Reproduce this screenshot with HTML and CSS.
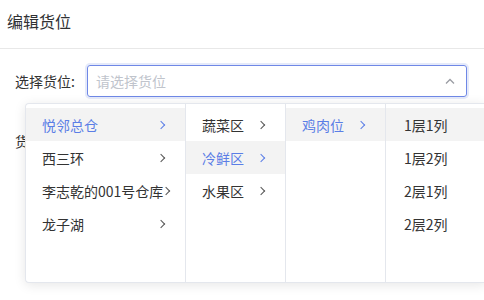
FILE: index.html
```html
<!DOCTYPE html>
<html lang="zh">
<head>
    <meta charset="UTF-8">
    <title>编辑货位</title>
    <link rel="stylesheet" href="styles.css">
</head>
<body>
    <div class="dialog">
        <div class="dialog-header">编辑货位</div>

        <div class="dialog-body">
            <div class="form-row">
                <label class="form-label">选择货位:</label>
                <div class="select">
                    <div class="select-input">
                        <span class="placeholder">请选择货位</span>
                        <svg class="select-arrow" width="10" height="6" viewBox="0 0 10 6">
                            <polyline points="1,5.5 5,1.5 9,5.5" fill="none" stroke="#9a9ca3" stroke-width="1.3"/>
                        </svg>
                    </div>

                    <div class="cascader">
                        <ul class="cascader-menu menu-wide">
                            <li class="item active"><span>悦邻总仓</span><i class="chev"></i></li>
                            <li class="item"><span>西三环</span><i class="chev"></i></li>
                            <li class="item"><span>李志乾的001号仓库</span><i class="chev"></i></li>
                            <li class="item"><span>龙子湖</span><i class="chev"></i></li>
                        </ul>
                        <ul class="cascader-menu">
                            <li class="item"><span>蔬菜区</span><i class="chev"></i></li>
                            <li class="item active"><span>冷鲜区</span><i class="chev"></i></li>
                            <li class="item"><span>水果区</span><i class="chev"></i></li>
                        </ul>
                        <ul class="cascader-menu">
                            <li class="item active"><span>鸡肉位</span><i class="chev"></i></li>
                        </ul>
                        <ul class="cascader-menu menu-last">
                            <li class="item leaf hover"><span>1层1列</span></li>
                            <li class="item leaf"><span>1层2列</span></li>
                            <li class="item leaf"><span>2层1列</span></li>
                            <li class="item leaf"><span>2层2列</span></li>
                        </ul>
                    </div>
                </div>
            </div>

            <div class="form-row">
                <label class="form-label">货位:</label>
                <div class="select">
                    <div class="select-input plain"></div>
                </div>
            </div>
        </div>
    </div>
</body>
</html>
```

FILE: styles.css
```css
body {
    margin: 0;
    padding: 0;
    font-family: "Noto Sans CJK SC", "Liberation Sans", sans-serif;
    font-size: 14px;
    color: #333;
    background-color: #fff;
}

.dialog {
    position: relative;
    width: 484px;
    height: 300px;
    overflow: hidden;
}

.dialog-header {
    height: 48px;
    line-height: 42px;
    padding-left: 7px;
    font-size: 16px;
    color: #303133;
    border-bottom: 1px solid #e8e8e8;
}

.dialog-body {
    padding: 16px 0 0 15px;
}

.form-row {
    display: flex;
    align-items: center;
    margin-bottom: 28px;
}

.form-label {
    width: 72px;
    flex-shrink: 0;
    color: #333;
}

.select {
    position: relative;
    width: 380px;
}

.select-input {
    display: flex;
    align-items: center;
    justify-content: space-between;
    height: 30px;
    padding: 0 11px 0 8px;
    border: 1px solid #6f88e6;
    border-radius: 3px;
    box-shadow: 0 0 0 2px rgba(111, 136, 230, 0.18);
}

.select-input.plain {
    border-color: #dcdfe6;
    box-shadow: none;
}

.placeholder {
    color: #c0c4cc;
}

.select-arrow {
    display: block;
}

/* 级联下拉 */
.cascader {
    position: absolute;
    top: 38px;
    left: -62px;
    z-index: 10;
    display: flex;
    height: 178px;
    background-color: #fff;
    border: 1px solid #e4e7ed;
    border-right: none;
    border-radius: 4px 0 0 4px;
    box-shadow: 0 2px 12px rgba(0, 0, 0, 0.1);
}

.cascader-menu {
    list-style: none;
    margin: 0;
    padding: 4px 0 0;
    width: 99px;
    border-right: 1px solid #e4e7ed;
}

.cascader-menu.menu-wide {
    width: 159px;
}

.cascader-menu.menu-last {
    width: 100px;
    border-right: none;
}

.item {
    display: flex;
    align-items: center;
    justify-content: space-between;
    height: 33px;
    padding: 0 20px 0 16px;
    white-space: nowrap;
    color: #333;
}

.item.leaf {
    padding-left: 18px;
}

.item.active {
    color: #5b7ee6;
    background-color: #f3f3f3;
}

.item.hover {
    background-color: #f3f3f3;
}

.chev {
    width: 5px;
    height: 5px;
    margin-right: 1px;
    border-top: 1px solid #555;
    border-right: 1px solid #555;
    transform: rotate(45deg);
    flex-shrink: 0;
}

.item.active .chev {
    border-color: #5b7ee6;
}
```
